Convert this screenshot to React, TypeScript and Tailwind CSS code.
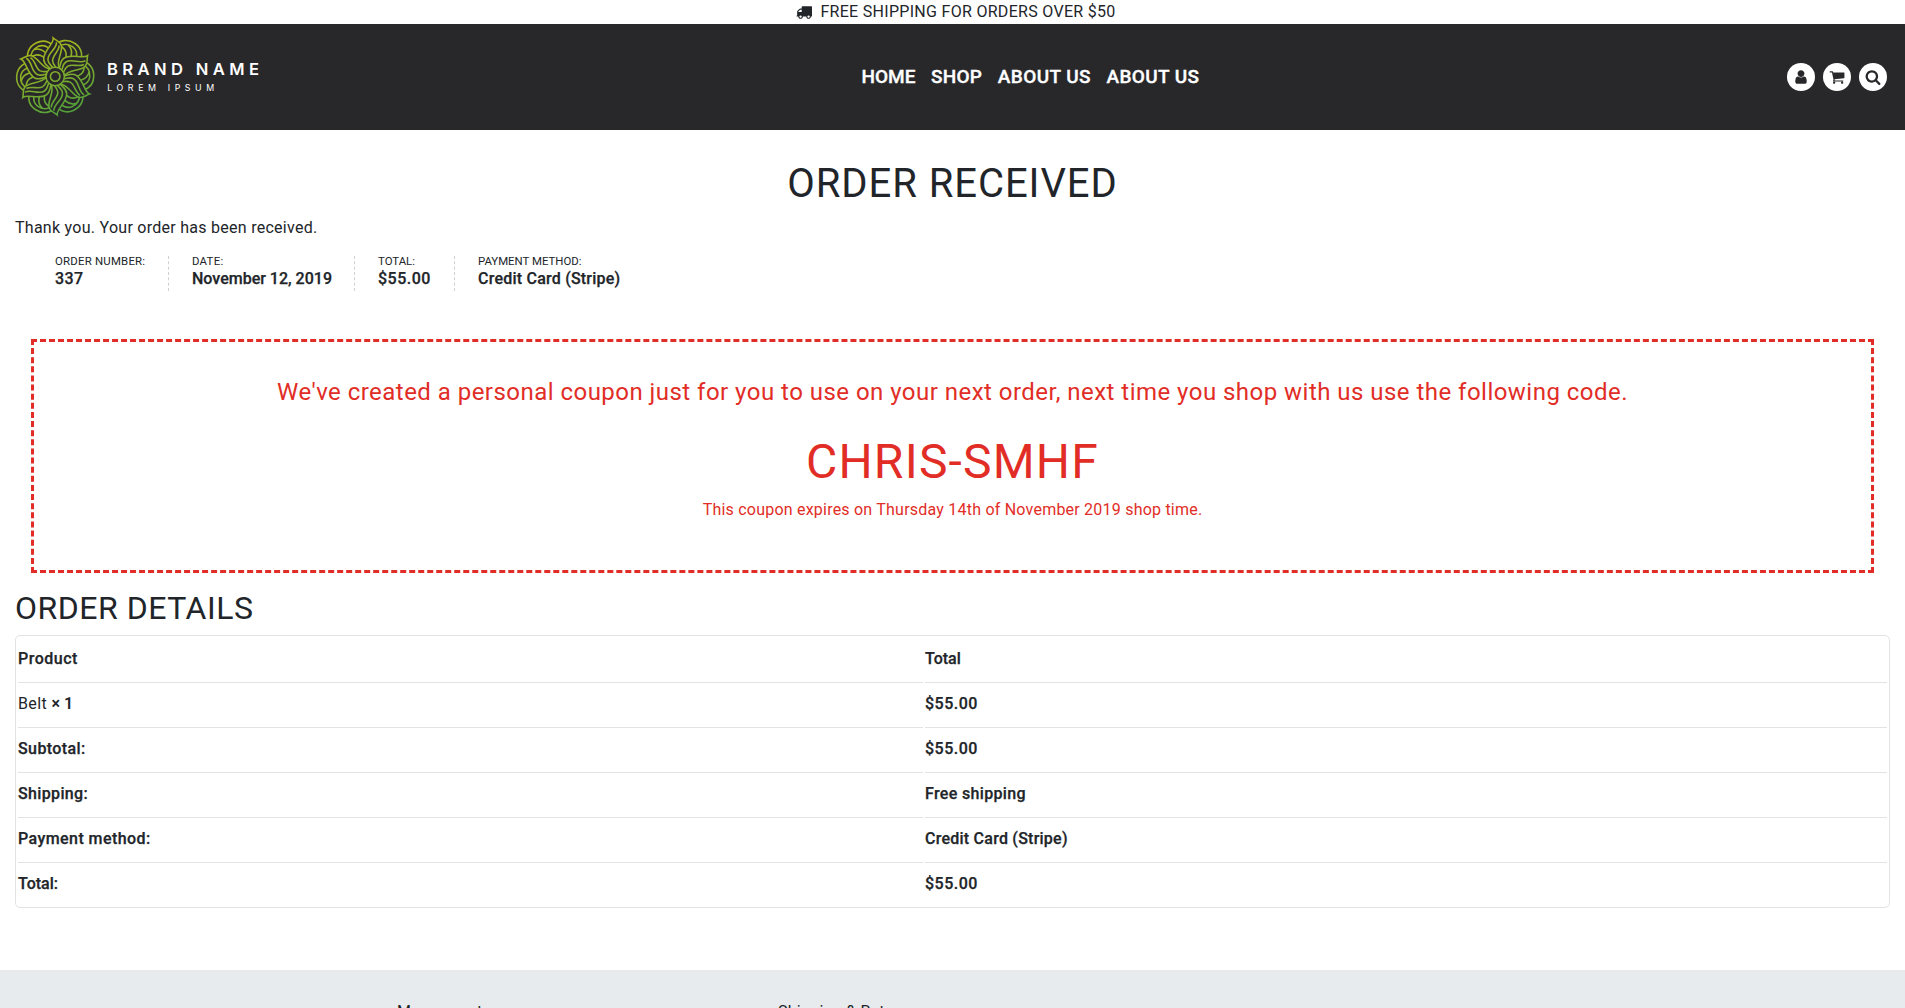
import type { ReactNode } from "react";

const ICONS = {
  truck:
    "M640 1408q0-52-38-90t-90-38-90 38-38 90 38 90 90 38 90-38 38-90zm-384-512h384v-256h-158q-13 0-22 9l-195 195q-9 9-9 22v30zm1280 512q0-52-38-90t-90-38-90 38-38 90 38 90 90 38 90-38 38-90zm256-1088v1024q0 15-4 26.5t-13.5 18.5-16.5 11.5-23.5 6-22.5 2-25.5 0-22.5-.5q0 106-75 181t-181 75-181-75-75-181h-384q0 106-75 181t-181 75-181-75-75-181h-64q-3 0-22.5.5t-25.5 0-22.5-2-23.5-6-16.5-11.5-13.5-18.5-4-26.5q0-26 19-45t45-19v-320q0-8-.5-35t0-38 2.5-34.5 6.5-37 14-30.5 22.5-30l198-198q19-19 50.5-32t58.5-13h160v-192q0-26 19-45t45-19h1024q26 0 45 19t19 45z",
  user:
    "M1536 1399q0 109-62.5 187t-150.5 78h-854q-88 0-150.5-78t-62.5-187q0-85 8.5-160.5t31.5-152 58.5-131 94-89 134.5-34.5q131 128 313 128t313-128q76 0 134.5 34.5t94 89 58.5 131 31.5 152 8.5 160.5zm-256-887q0 159-112.5 271.5t-271.5 112.5-271.5-112.5-112.5-271.5 112.5-271.5 271.5-112.5 271.5 112.5 112.5 271.5z",
  cart:
    "M704 1536q0 52-38 90t-90 38-90-38-38-90 38-90 90-38 90 38 38 90zm896 0q0 52-38 90t-90 38-90-38-38-90 38-90 90-38 90 38 38 90zm128-1088v512q0 24-16.5 42.5t-40.5 21.5l-1044 122q13 60 13 70 0 16-24 64h920q26 0 45 19t19 45-19 45-45 19h-1024q-26 0-45-19t-19-45q0-11 8-31.5t16-36 21.5-40 15.5-29.5l-177-823h-204q-26 0-45-19t-19-45 19-45 45-19h256q16 0 28.5 6.5t19.5 15.5 13 24.5 8 26 5.5 29.5 4.5 26h1201q26 0 45 19t19 45z",
  search:
    "M1216 832q0-185-131.5-316.5t-316.5-131.5-316.5 131.5-131.5 316.5 131.5 316.5 316.5 131.5 316.5-131.5 131.5-316.5zm512 832q0 52-38 90t-90 38q-54 0-90-38l-343-342q-179 124-399 124-143 0-273.5-55.5t-225-150-150-225-55.5-273.5 55.5-273.5 150-225 225-150 273.5-55.5 273.5 55.5 225 150 150 225 55.5 273.5q0 220-124 399l343 343q37 37 37 90z",
};

function Icon({ name, className }: { name: keyof typeof ICONS; className?: string }) {
  return (
    <svg viewBox="0 0 1792 1792" fill="currentColor" className={className}>
      <path d={ICONS[name]} />
    </svg>
  );
}

const TURNS = [0, 60, 120, 180, 240, 300];

function Logo() {
  return (
    <svg viewBox="0 0 259 106" className="h-[106px] w-[259px] shrink-0">
      <defs>
        <linearGradient id="leaf" gradientUnits="userSpaceOnUse" x1="-50" y1="-115" x2="45" y2="120">
          <stop offset="0" stopColor="#adb71c" />
          <stop offset="1" stopColor="#4d9f3c" />
        </linearGradient>
        <mask id="flower" maskUnits="userSpaceOnUse" x="-130" y="-130" width="260" height="260">
          <g fill="none" stroke="#fff" strokeWidth="4.8">
            {TURNS.map((a) => (
              <g key={a} transform={`rotate(${a + 30})`}>
                <path d="M-48-74C-46-104-24-119 2-117C30-115 46-94 43-62" />
                <path d="M-36-84C-30-98-16-106 0-105C20-103 31-86 28-58" />
                <path d="M-14-103C8-98 15-80 14-48" />
                <path d="M-30-88C-10-88 2-74 2-44" />
              </g>
            ))}
            {TURNS.map((a) => (
              <g key={a} transform={`rotate(${a})`}>
                <path
                  fill="#000"
                  d="M-6-117C-3-100-36-78-35-52C-34-36-22-32-16-24L12-26C2-46 22-70 19-92C17-106 4-108-6-117Z"
                />
                <path d="M4-104C6-84-24-72-22-50C-21-38-12-34-8-28" />
                <path d="M12-94C12-76-9-64-8-48C-7-38-2-34 2-28" />
              </g>
            ))}
            <circle r="28" fill="#000" />
            <circle r="14.5" />
          </g>
        </mask>
      </defs>
      <g transform="translate(40.2 52.5) scale(.329)">
        <rect x="-130" y="-130" width="260" height="260" fill="url(#leaf)" mask="url(#flower)" />
      </g>
      <g fill="#fff" className="font-['Inter',sans-serif]">
        <text x="92" y="51.4" fontSize="16.6" fontWeight="600" textLength="152" lengthAdjust="spacing">
          BRAND NAME
        </text>
        <text x="92.2" y="67.4" fontSize="8.8" fontWeight="400" textLength="107" lengthAdjust="spacing">
          LOREM IPSUM
        </text>
      </g>
    </svg>
  );
}

function Round({ name }: { name: keyof typeof ICONS }) {
  return (
    <a className="flex size-7 items-center justify-center rounded-full bg-white text-[#28282b]">
      <Icon name={name} className="size-4" />
    </a>
  );
}

function Fact({ label, value, className }: { label: ReactNode; value: ReactNode; className: string }) {
  return (
    <li className={"h-[35px] whitespace-nowrap " + className}>
      <div className="text-[11.4px] leading-[11px]">{label}</div>
      <div className="text-base leading-6 font-medium [-webkit-text-stroke:.25px]">{value}</div>
    </li>
  );
}

const ROWS: [ReactNode, ReactNode][] = [
  [<span className="tracking-[.5px]">Product</span>, "Total"],
  [
    <span className="font-normal [-webkit-text-stroke:0]">
      <span className="tracking-[.4px]">Belt </span>
      <b className="font-semibold">× 1</b>
    </span>,
    <span className="tracking-[.5px]">$55.00</span>,
  ],
  [<span className="tracking-[.4px]">Subtotal:</span>, <span className="tracking-[.5px]">$55.00</span>],
  [<span className="tracking-[.35px]">Shipping:</span>, <span className="tracking-[.34px]">Free shipping</span>],
  [<span className="tracking-[.42px]">Payment method:</span>, <span className="tracking-[.24px]">Credit Card (Stripe)</span>],
  ["Total:", <span className="tracking-[.5px]">$55.00</span>],
];

export default function App() {
  return (
    <div className="flex h-[1008px] flex-col overflow-hidden bg-white font-['Roboto',sans-serif] text-base leading-6 text-[#212529]">
      <div className="flex h-6 shrink-0 items-center justify-center pl-[7px]">
        <Icon name="truck" className="mr-2 size-4" />
        <span className="tracking-[.3px]">FREE SHIPPING FOR ORDERS OVER $50</span>
      </div>

      <header className="flex h-[106px] shrink-0 items-center justify-between bg-[#28282b] pr-[18px] pl-[15px]">
        <Logo />
        <nav className="flex gap-[15.5px] pb-px text-[19px] font-medium text-white [-webkit-text-stroke:.35px]">
          <a>HOME</a>
          <a className="tracking-[.3px]">SHOP</a>
          <a className="tracking-[.4px]">ABOUT US</a>
          <a className="tracking-[.4px]">ABOUT US</a>
        </nav>
        <div className="flex gap-2 pb-px">
          <Round name="user" />
          <Round name="cart" />
          <Round name="search" />
        </div>
      </header>

      <main className="h-[840px] shrink-0 px-[15px] pt-[30px]">
        <h1 className="mb-2 text-center text-[40px] leading-[48px] tracking-[.94px]">ORDER RECEIVED</h1>
        <p className="tracking-[.27px]">Thank you. Your order has been received.</p>

        <ul className="mt-4 flex pl-10">
          <Fact
            className="mr-[23px] w-[114px] border-r border-dashed border-[#d3ced2]"
            label={<span className="tracking-[.22px]">ORDER NUMBER:</span>}
            value={<span className="tracking-[.4px]">337</span>}
          />
          <Fact
            className="mr-[23px] w-[163px] border-r border-dashed border-[#d3ced2]"
            label={<span className="tracking-[.26px]">DATE:</span>}
            value="November 12, 2019"
          />
          <Fact
            className="mr-[23px] w-[77px] border-r border-dashed border-[#d3ced2]"
            label="TOTAL:"
            value={<span className="tracking-[.5px]">$55.00</span>}
          />
          <Fact
            className=""
            label="PAYMENT METHOD:"
            value={<span className="tracking-[.22px]">Credit Card (Stripe)</span>}
          />
        </ul>

        <section className="mx-4 mt-12 h-[234px] border-[3px] border-dashed border-[#e12d26] pt-9 text-center text-[#e12d26]">
          <p className="text-2xl leading-[29px] tracking-[.47px]">
            We've created a personal coupon just for you to use on your next order, next time you shop with us use the
            following code.
          </p>
          <p className="mt-[26px] text-5xl leading-[58px] tracking-[1.2px]">CHRIS-SMHF</p>
          <p className="mt-[7px] tracking-[.22px]">This coupon expires on Thursday 14th of November 2019 shop time.</p>
        </section>

        <h2 className="mt-4 mb-2 text-[32px] leading-[38px] tracking-[.52px]">ORDER DETAILS</h2>

        <div className="rounded-[5px] border border-[#e3e3e3] px-0.5 pt-0.5 font-medium [-webkit-text-stroke:.25px]">
          {ROWS.map(([name, total], i) => (
            <div key={i} className="group grid grid-cols-[905px_1fr] gap-x-0.5">
              <div className="h-[45px] border-b border-[#e3e3e3] pt-[9px] group-last:h-11 group-last:border-0">{name}</div>
              <div className="h-[45px] border-b border-[#e3e3e3] pt-[9px] group-last:h-11 group-last:border-0">{total}</div>
            </div>
          ))}
        </div>
      </main>

      <footer className="grid h-24 shrink-0 grid-cols-5 bg-[#e7ebee] pt-[30px] tracking-[.25px]">
        <a className="col-start-2 pl-4">My account</a>
        <a className="pl-4">Shipping &amp; Returns</a>
      </footer>
    </div>
  );
}
